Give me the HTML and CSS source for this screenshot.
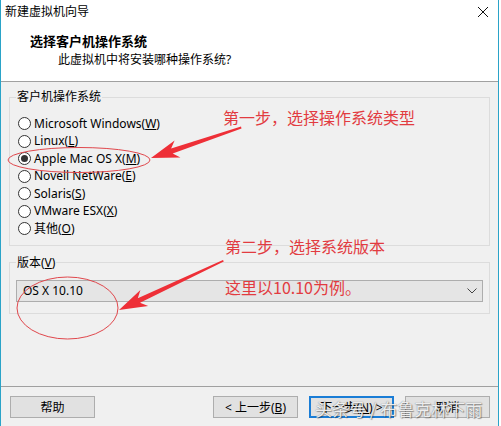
FILE: index.html
```html
<!DOCTYPE html>
<html lang="zh-CN">

<head>
  <meta charset="UTF-8">
  <meta name="viewport" content="width=device-width, initial-scale=1.0">
  <title>新建虚拟机向导</title>
  <link rel="stylesheet" href="styles.css">
</head>

<body>
  <div class="window">
    <div class="titlebar">
      <span class="caption">新建虚拟机向导</span>
      <svg class="close" width="12" height="12" viewBox="0 0 12 12">
        <path d="M1 1 L11 11 M11 1 L1 11" stroke="#111" stroke-width="1" fill="none" />
      </svg>
    </div>
    <div class="header">
      <div class="heading">选择客户机操作系统</div>
      <div class="subheading">此虚拟机中将安装哪种操作系统?</div>
    </div>

    <div class="content">
      <fieldset class="group os-group">
        <legend>客户机操作系统</legend>
        <label class="radio"><span class="dot"></span>Microsoft Windows(<u>W</u>)</label>
        <label class="radio"><span class="dot"></span>Linux(<u>L</u>)</label>
        <label class="radio checked"><span class="dot"></span>Apple Mac OS X(<u>M</u>)</label>
        <label class="radio"><span class="dot"></span>Novell NetWare(<u>E</u>)</label>
        <label class="radio"><span class="dot"></span>Solaris(<u>S</u>)</label>
        <label class="radio"><span class="dot"></span>VMware ESX(<u>X</u>)</label>
        <label class="radio"><span class="dot"></span>其他(<u>O</u>)</label>
      </fieldset>

      <fieldset class="group version-group">
        <legend>版本(<u>V</u>)</legend>
        <div class="select">
          <span>OS X 10.10</span>
          <svg width="10" height="6" viewBox="0 0 10 6">
            <path d="M0.5 0.5 L5 5 L9.5 0.5" stroke="#444" stroke-width="1" fill="none" />
          </svg>
        </div>
      </fieldset>
    </div>

    <div class="footer">
      <button class="btn">帮助</button>
      <div class="nav">
        <button class="btn">&lt; 上一步(<u>B</u>)</button>
        <button class="btn default">下一步(<u>N</u>) &gt;</button>
        <button class="btn">取消</button>
      </div>
    </div>

    <!-- 标注层：箭头、圈和说明文字 -->
    <div class="notes">
      <svg width="501" height="426" viewBox="0 0 501 426">
        <ellipse cx="79" cy="160" rx="71" ry="12.5" fill="none" stroke="#e0474c" stroke-width="1" />
        <ellipse cx="67.5" cy="308" rx="50.5" ry="31" fill="none" stroke="#e0474c" stroke-width="1" />
        <polygon fill="#ee2f37"
          points="241,126.5 171.1,148.6 174.6,140.5 151,158 180.4,157.5 172.7,153.4 241.5,128.5" />
        <polygon fill="#ee2f37"
          points="223,260 137.8,298.2 140.4,289.9 119,310 148.2,306.1 140,302.8 223.8,261.6" />
      </svg>
      <span class="note note-1">第一步，选择操作系统类型</span>
      <span class="note note-2">第二步，选择系统版本</span>
      <span class="note note-3">这里以10.10为例。</span>
      <span class="watermark">头条号 / 布鲁克林下雨</span>
    </div>
  </div>
</body>

</html>
```

FILE: styles.css
```css
* {
  margin: 0;
  padding: 0;
  box-sizing: border-box;
}

body {
  width: 501px;
  height: 426px;
  overflow: hidden;
  background: #ffffff;
  font-family: "Noto Sans", "Noto Sans CJK SC", sans-serif;
  font-size: 12px;
  color: #000;
}

.window {
  position: relative;
  width: 499px;
  height: 426px;
  display: flex;
  flex-direction: column;
  background: #f0f0f0;
  border-left: 1px solid #2aa3c8;
  border-right: 1px solid #2aa3c8;
}

.titlebar {
  height: 24px;
  display: flex;
  align-items: center;
  justify-content: space-between;
  padding: 0 9px 0 4px;
  background: #ffffff;
}

.caption {
  font-size: 12px;
  line-height: 16px;
}

.header {
  height: 58px;
  padding: 8px 0 0 29px;
  background: #ffffff;
  border-bottom: 1px solid #a0a0a0;
}

.heading {
  font-size: 13px;
  font-weight: bold;
  line-height: 18px;
}

.subheading {
  margin: 2px 0 0 28px;
  line-height: 16px;
}

.content {
  padding: 0 8px 0 8px;
}

.group {
  border: 1px solid #dcdcdc;
  min-width: 0;
}

.group legend {
  line-height: 16px;
  padding: 0 1px;
}

.os-group {
  margin-top: 7px;
  padding: 10px 8px 7px 8px;
}

.os-group legend {
  margin-left: -2px;
}

.version-group {
  margin-top: 9px;
  padding: 9px 6px 11px 6px;
}

.radio {
  display: flex;
  align-items: center;
  height: 17.5px;
  line-height: 16px;
}

.dot {
  width: 13px;
  height: 13px;
  margin-right: 3px;
  border: 1px solid #333;
  border-radius: 50%;
  background: #ffffff;
  display: flex;
  align-items: center;
  justify-content: center;
}

.checked .dot::after {
  content: "";
  width: 7px;
  height: 7px;
  border-radius: 50%;
  background: #333;
}

.select {
  height: 22px;
  display: flex;
  align-items: center;
  justify-content: space-between;
  padding: 0 5px 0 6px;
  background: #e5e5e5;
  border: 1px solid #adadad;
}

.footer {
  margin-top: auto;
  height: 40px;
  display: flex;
  justify-content: space-between;
  padding: 9px 8px 8px 9px;
  border-top: 1px solid #a0a0a0;
}

.nav {
  display: flex;
  gap: 11px;
}

.btn {
  width: 85px;
  height: 22px;
  font-family: inherit;
  font-size: 12px;
  background: #e1e1e1;
  border: 1px solid #adadad;
  color: #000;
}

.btn.default {
  border: 2px solid #1a7dd6;
}

.notes {
  position: absolute;
  left: -1px;
  top: 0;
  width: 501px;
  height: 426px;
  pointer-events: none;
}

.notes svg {
  position: absolute;
  left: 0;
  top: 0;
}

.note {
  position: absolute;
  font-family: "Noto Sans CJK SC", sans-serif;
  font-size: 16px;
  line-height: 20px;
  color: #e23b40;
  white-space: nowrap;
}

.note-1 {
  left: 223px;
  top: 107px;
}

.note-2 {
  left: 225px;
  top: 236px;
}

.note-3 {
  left: 225px;
  top: 277px;
}

.watermark {
  position: absolute;
  left: 315px;
  top: 398px;
  font-family: "Noto Sans CJK SC", sans-serif;
  font-size: 17px;
  line-height: 22px;
  color: rgba(255, 255, 255, 0.88);
  text-shadow: 0 0 1px rgba(60, 60, 60, 0.7), 1px 1px 1px rgba(0, 0, 0, 0.35);
  white-space: nowrap;
}
```
